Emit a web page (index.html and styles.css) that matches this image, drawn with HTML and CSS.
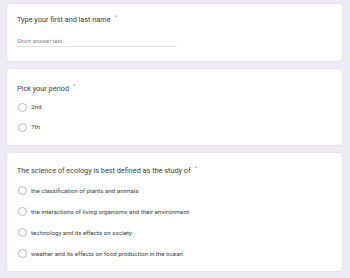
FILE: index.html
```html
<!DOCTYPE html>
<html>
<head>
<meta charset="utf-8">
<link rel="stylesheet" href="styles.css">
</head>
<body>
<div class="page">
  <div class="card card-name">
    <div class="q-title">Type your first and last name<span class="req">*</span></div>
    <div class="short-input">Short answer text</div>
  </div>
  <div class="card card-period">
    <div class="q-title">Pick your period<span class="req">*</span></div>
    <div class="options opts-period">
      <div class="opt"><span class="radio"></span><span class="opt-label">2nd</span></div>
      <div class="opt"><span class="radio"></span><span class="opt-label">7th</span></div>
    </div>
  </div>
  <div class="card card-eco">
    <div class="q-title">The science of ecology is best defined as the study of<span class="req">*</span></div>
    <div class="options opts-eco">
      <div class="opt"><span class="radio"></span><span class="opt-label">the classification of plants and animals</span></div>
      <div class="opt"><span class="radio"></span><span class="opt-label">the interactions of living organisms and their environment</span></div>
      <div class="opt"><span class="radio"></span><span class="opt-label">technology and its effects on society</span></div>
      <div class="opt"><span class="radio"></span><span class="opt-label">weather and its effects on food production in the ocean</span></div>
    </div>
  </div>
</div>
</body>
</html>
```

FILE: styles.css
```css
html, body {
  margin: 0;
  padding: 0;
  background: #efecf6;
  font-family: Roboto, "Liberation Sans", Arial, sans-serif;
  color: #3c4043;
}
.page {
  display: flex;
  flex-direction: column;
  gap: 6px;
  padding: 3px 0 0 6px;
  width: 337px;
}
.card {
  background: #ffffff;
  border: 1px solid #e6e3ee;
  border-radius: 4px;
  box-sizing: border-box;
  padding-left: 10px;
  display: flex;
  flex-direction: column;
}
.card-name {
  height: 59px;
  padding-top: 8px;
}
.card-period {
  height: 78px;
  padding-top: 12px;
}
.card-eco {
  height: 120px;
  padding-top: 10px;
}
.q-title {
  font-size: 7.3px;
  line-height: 10px;
  white-space: nowrap;
  color: #3c4043;
}
.req {
  color: #e06b60;
  font-size: 6px;
  margin-left: 4px;
  vertical-align: 3px;
}
.short-input {
  margin-top: 12px;
  width: 160px;
  font-size: 5.8px;
  line-height: 8px;
  color: #80868b;
  border-bottom: 1px solid #e0e2e6;
  padding-bottom: 1px;
}
.options {
  display: flex;
  flex-direction: column;
}
.opts-period {
  margin-top: 3px;
}
.opts-eco {
  margin-top: 4px;
}
.opt {
  display: flex;
  align-items: center;
  height: 20px;
}
.opts-eco .opt {
  height: 21px;
}
.radio {
  width: 9px;
  height: 9px;
  box-sizing: border-box;
  border: 1px solid #b4b8bd;
  border-radius: 50%;
  margin-left: 1px;
  flex: none;
}
.opt-label {
  margin-left: 4px;
  font-size: 6.2px;
  line-height: 8px;
  white-space: nowrap;
  color: #3c4043;
}
```
